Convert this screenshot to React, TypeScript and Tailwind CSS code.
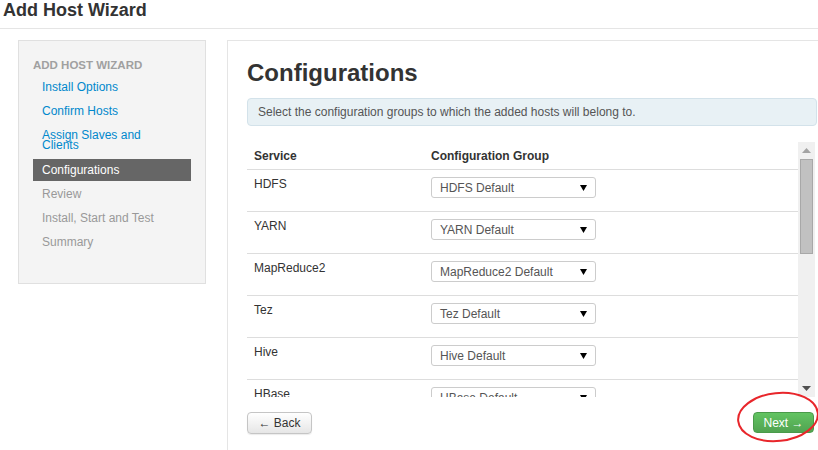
import React from "react";

const steps = [
  { label: "Install Options", state: "done" },
  { label: "Confirm Hosts", state: "done" },
  { label: "Assign Slaves and Clients", state: "done", tall: true },
  { label: "Configurations", state: "active" },
  { label: "Review", state: "todo" },
  { label: "Install, Start and Test", state: "todo" },
  { label: "Summary", state: "todo" },
];

const services = ["HDFS", "YARN", "MapReduce2", "Tez", "Hive", "HBase"];

function Caret({ size = 7, color = "#000" }: { size?: number; color?: string }) {
  return (
    <svg width={size} height={size - 1} viewBox="0 0 7 6">
      <path d="M0 0h7L3.5 6z" fill={color} />
    </svg>
  );
}

function FakeSelect({ value }: { value: string }) {
  return (
    <div className="flex h-[21px] w-[165px] items-center justify-between rounded-[3px] border border-[#cccccc] bg-white pl-[8px] pr-[8px] text-[12px] text-[#555]">
      <span>{value}</span>
      <Caret />
    </div>
  );
}

export default function App() {
  return (
    <div className="relative h-[450px] w-[818px] overflow-hidden bg-white font-['Liberation_Sans',Arial,sans-serif] text-[#333]">
      {/* page title */}
      <div className="h-[29px] border-b border-[#e5e5e5] pl-[3px]">
        <h2 className="text-[18px] font-bold leading-[20px] text-[#333]">Add Host Wizard</h2>
      </div>

      <div className="flex items-start pt-[11px] pl-[18px]">
        {/* wizard steps sidebar */}
        <div className="h-[244px] w-[188px] shrink-0 border border-[#e0e0e0] bg-[#f4f4f4] px-[14px] pt-[17px]">
          <div className="text-[11.5px] font-bold uppercase leading-[14px] text-[#a0a0a0]">Add Host Wizard</div>
          <ul className="mt-[3px]">
            {steps.map((s) => {
              if (s.state === "active")
                return (
                  <li key={s.label} className="flex h-[22px] items-center bg-[#666666] pl-[9px] text-[12px] text-white">
                    {s.label}
                  </li>
                );
              if (s.tall)
                return (
                  <li key={s.label} className="h-[36px] pl-[9px] pt-[7px] text-[12px] leading-[10px] text-[#0088cc]">
                    <span className="block w-[106px]">{s.label}</span>
                  </li>
                );
              return (
                <li
                  key={s.label}
                  className={`flex h-[24px] items-center pl-[9px] text-[12px] ${s.state === "done" ? "text-[#0088cc]" : "text-[#999]"} ${s.label === "Review" ? "mt-[1px]" : ""}`}
                >
                  {s.label}
                </li>
              );
            })}
          </ul>
        </div>

        {/* main panel */}
        <div className="ml-[21px] h-[430px] w-[610px] shrink-0 border-l border-t border-[#e5e5e5] pl-[19px] pr-[20px] pt-[19px]">
          <h3 className="text-[24px] font-bold leading-[26px] text-[#333]">Configurations</h3>
          <div className="mt-[12px] flex h-[28px] items-center rounded-[4px] border border-[#d3e2ea] bg-[#e8f1f5] px-[10px] text-[12px] text-[#555]">
            Select the configuration groups to which the added hosts will belong to.
          </div>

          <div className="mt-[16px] flex h-[255px] w-[568px]">
            <div className="h-full w-[551px] overflow-hidden">
              <div className="flex h-[27px] text-[12px] font-bold leading-[16px] text-[#333]">
                <div className="w-[176px] pl-[7px] pt-[6px]">Service</div>
                <div className="pl-[8px] pt-[6px]">Configuration Group</div>
              </div>
              {services.map((svc) => (
                <div key={svc} className="flex h-[42px] border-t border-[#dddddd] text-[12px]">
                  <div className="w-[176px] pl-[7px] pt-[6px] leading-[16px] text-[#333]">{svc}</div>
                  <div className="pl-[8px] pt-[7px]">
                    <FakeSelect value={`${svc} Default`} />
                  </div>
                </div>
              ))}
            </div>
            {/* scrollbar */}
            <div className="flex h-full w-[17px] flex-col items-center bg-[#f0f0f0]">
              <div className="flex h-[17px] items-center justify-center">
                <svg width="9" height="5" viewBox="0 0 9 5">
                  <path d="M4.5 0L9 5H0z" fill="#a3a3a3" />
                </svg>
              </div>
              <div className="h-[95px] w-[13px] border border-[#a8a8a8] bg-[#c1c1c1]" />
              <div className="flex-1" />
              <div className="flex h-[17px] items-center justify-center">
                <svg width="9" height="5" viewBox="0 0 9 5">
                  <path d="M0 0h9L4.5 5z" fill="#505050" />
                </svg>
              </div>
            </div>
          </div>

          <div className="mt-[15px] flex w-[568px] items-start justify-between">
            <button className="h-[22px] w-[65px] rounded-[4px] border border-[#c5c5c5] bg-gradient-to-b from-white to-[#e6e6e6] text-[12px] text-[#333] shadow-[0_1px_1px_rgba(0,0,0,0.08)]">
              ← Back
            </button>
            <button className="mr-[1px] h-[21px] w-[61px] rounded-[4px] border border-[#4a9a4a] bg-gradient-to-b from-[#62c462] to-[#51a351] text-[12px] text-white">
              Next →
            </button>
          </div>
        </div>
      </div>

      {/* red annotation circle */}
      <svg className="pointer-events-none absolute left-0 top-0" width="818" height="450">
        <ellipse cx="778" cy="417" rx="40" ry="24" transform="rotate(-6 778 417)" fill="none" stroke="#e8262b" strokeWidth="2" />
      </svg>
    </div>
  );
}
